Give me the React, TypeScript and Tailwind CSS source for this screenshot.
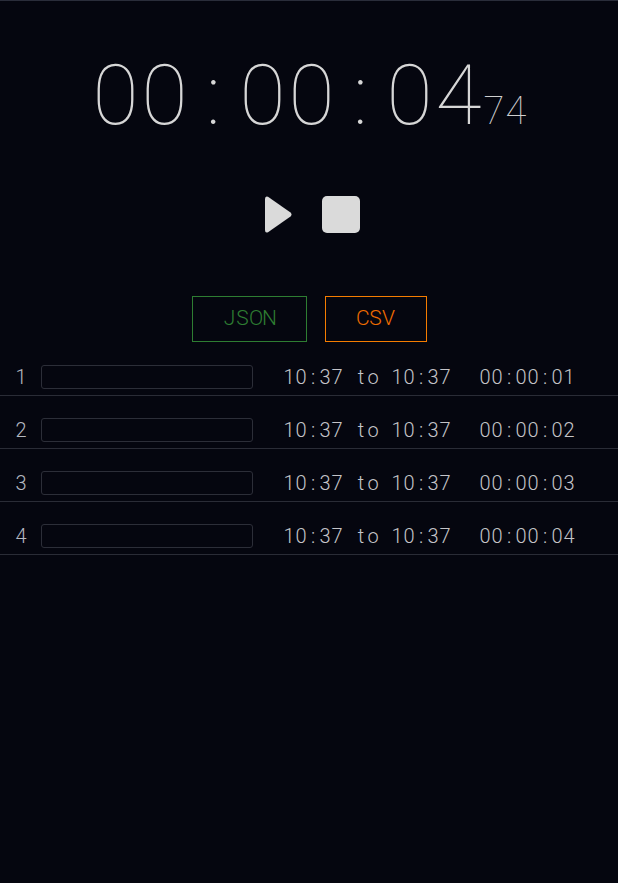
import React from "react";

const font = { fontFamily: "Roboto, 'Noto Sans', sans-serif" };

// each glyph gets a fixed cell so the clock reads like a monospace face
function Mono({ text, cell }: { text: string; cell: string }) {
    return (
        <>
            {text.split("").map((c, i) => (
                <span key={i} className={`inline-block text-center ${cell}`}>
                    {c === " " ? "\u00a0" : c}
                </span>
            ))}
        </>
    );
}

const laps = [
    { id: 1, from: "10:37", to: "10:37", took: "00:00:01" },
    { id: 2, from: "10:37", to: "10:37", took: "00:00:02" },
    { id: 3, from: "10:37", to: "10:37", took: "00:00:03" },
    { id: 4, from: "10:37", to: "10:37", took: "00:00:04" },
];

export default function App() {
    return (
        <div
            className="min-h-screen bg-[#05060f] border-t border-[#2a2d3a] slashed-zero tabular-nums"
            style={font}
        >
            <div className="pt-[53px] flex justify-center items-baseline leading-none text-[#d6d6d6]">
                <span className="text-[84px] font-thin">
                    <Mono text="00:00:04" cell="w-[49px]" />
                </span>
                <span className="text-[38px] font-thin text-[#cfcfcf]">
                    <Mono text="74" cell="w-[22px]" />
                </span>
            </div>

            <div className="mt-[58px] flex justify-center items-center gap-[30px] pl-[6px]">
                <button className="w-[27px] h-[37px]">
                    <svg width="27" height="37" viewBox="0 0 27 37">
                        <path
                            d="M3 0.8 Q0 -0.4 0 3 V34 Q0 37.4 3 36.2 L25.5 20.5 Q27.5 18.5 25.5 16.5 Z"
                            fill="#dadada"
                        />
                    </svg>
                </button>
                <button className="w-[38px] h-[37px] rounded-[5px] bg-[#dadada]" />
            </div>

            <div className="mt-[63px] flex justify-center gap-[18px]">
                <button className="w-[115px] h-[46px] border border-[#2e7d32] text-[#2e7d32] text-[21px] font-light">
                    <Mono text="JSON" cell="w-[13px]" />
                </button>
                <button className="w-[102px] h-[46px] border border-[#f57c00] text-[#ef6c00] text-[21px] font-light">
                    <Mono text="CSV" cell="w-[13px]" />
                </button>
            </div>

            <div className="mt-px">
                {laps.map((lap) => (
                    <div
                        key={lap.id}
                        className="flex items-center pt-[22px] pb-[6px] border-b border-[#2a2c36] text-[20px] leading-none font-light"
                    >
                        <span className="w-[12px] ml-[15px] text-center text-[#b4b8c0]">
                            {lap.id}
                        </span>
                        <input
                            className="ml-[14px] w-[212px] h-[24px] rounded-[3px] border border-[#2c2e38] bg-transparent outline-none"
                            type="text"
                        />
                        <span className="ml-[30px] text-[#c4c4c8]">
                            <Mono text={`${lap.from} to ${lap.to}`} cell="w-[12px]" />
                        </span>
                        <span className="ml-[28px] text-[#c4c4c8]">
                            <Mono text={lap.took} cell="w-[12px]" />
                        </span>
                    </div>
                ))}
            </div>
        </div>
    );
}
